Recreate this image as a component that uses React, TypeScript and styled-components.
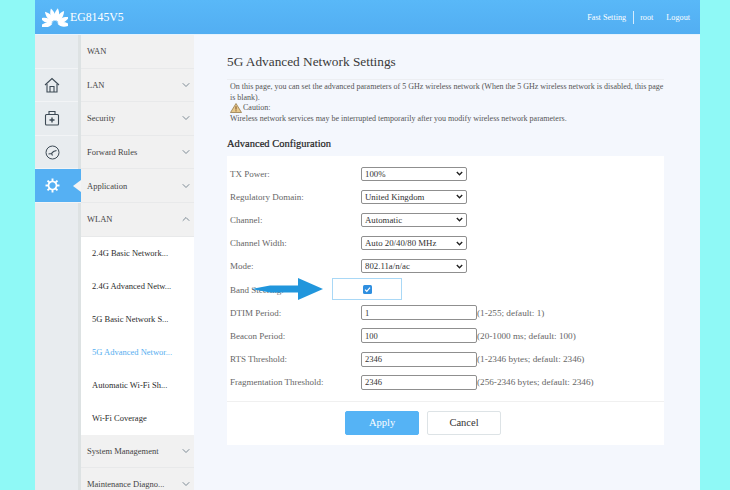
import React from 'react';
import styled, { createGlobalStyle } from 'styled-components';
import { ChevronDown, ChevronUp } from 'lucide-react';

const GlobalStyle = createGlobalStyle`
  html, body {
    margin: 0;
    padding: 0;
    height: 100%;
    overflow: hidden;
    background: #8ff9f6;
    font-family: "Liberation Serif", "Times New Roman", serif;
  }
`

const Page = styled.div`
  width: 665px;
  height: 490px;
  margin-left: 35px;
  display: flex;
  flex-direction: column;
  overflow: hidden;
`

const Header = styled.header`
  height: 34px;
  flex: none;
  display: flex;
  align-items: center;
  justify-content: space-between;
  padding: 0 3.5px 0 7px;
  background: linear-gradient(#59b8f8, #52aef2);
  border-bottom: 1px solid #e6f3fd;
  color: #fff;
`

const Brand = styled.div`
  display: flex;
  align-items: center;
  gap: 2px;
  font-size: 11.8px;
`

const TopLinks = styled.div`
  display: flex;
  align-items: center;
  font-size: 8.2px;
`

const TopLink = styled.span<{ $divided?: boolean }>`
  padding: 2px 6.5px;
  ${(p) => p.$divided && 'border-left: 1px solid #d5ecfd;'}
`

const Body = styled.div`
  flex: 1;
  display: flex;
  min-height: 0;
`

const Rail = styled.nav`
  width: 46px;
  flex: none;
  box-sizing: border-box;
  background: #e8ecef;
  border-right: 3px solid #dde2e3;
`

const RailItem = styled.div<{ $active?: boolean }>`
  position: relative;
  height: 33.6px;
  width: ${(p) => (p.$active ? '46px' : 'auto')};
  display: flex;
  align-items: center;
  justify-content: center;
  box-sizing: border-box;
  padding-right: ${(p) => (p.$active ? '12px' : '9px')};
  border-bottom: 1px solid #f2f4f6;
  background: ${(p) => (p.$active ? '#55b0f3' : 'transparent')};
  color: ${(p) => (p.$active ? '#fff' : '#3d4a55')};

  ${(p) =>
    p.$active &&
    `&::after {
      content: '';
      position: absolute;
      right: 0;
      top: 11px;
      border-style: solid;
      border-width: 6px 8px 6px 0;
      border-color: transparent #f4f4f4 transparent transparent;
    }`}
`

const Menu = styled.nav`
  width: 113px;
  flex: none;
  background: #f1f1f1;
`

const MenuItem = styled.div`
  height: 33.6px;
  box-sizing: border-box;
  display: flex;
  align-items: center;
  justify-content: space-between;
  padding: 0 2px 0 6px;
  border-bottom: 1px solid #e8e9ea;
  font-size: 8.5px;
  color: #444;
`

const SubMenu = styled.div`
  background: #fff;
`

const SubItem = styled.div<{ $active?: boolean }>`
  height: 33px;
  display: flex;
  align-items: center;
  padding-left: 11px;
  font-size: 8.5px;
  color: ${(p) => (p.$active ? '#55aef0' : '#2b2b2b')};
`

const Main = styled.main`
  flex: 1;
  min-width: 0;
  background: #f4f7fd;
  padding: 0 36px 0 33px;
`

const Title = styled.h1`
  margin: 18px 0 0;
  height: 26px;
  font-size: 13.3px;
  line-height: 17px;
  font-weight: 400;
  color: #3a3a3a;
  border-bottom: 1px solid #eceef2;
`

const Notice = styled.div`
  margin: 2px 0 0 3px;
  font-size: 8px;
  line-height: 10.5px;
  color: #555;
`

const Caution = styled.div`
  display: flex;
  align-items: center;
  gap: 1px;
`

const SectionTitle = styled.h2`
  margin: 13px 0 0;
  height: 19px;
  font-size: 10.5px;
  line-height: 14px;
  font-weight: 400;
  color: #222;
  -webkit-text-stroke: 0.2px #222;
`

const Panel = styled.section`
  position: relative;
  background: #fff;
  height: 289px;
  box-sizing: border-box;
  padding-top: 6px;
`

const Row = styled.div`
  height: 23.2px;
  display: grid;
  grid-template-columns: 131px auto;
  justify-content: start;
  align-items: center;
  padding-left: 3px;
  font-size: 9px;
  color: #666;
`

const Field = styled.div`
  display: flex;
  align-items: center;
`

const Select = styled.select`
  width: 106px;
  height: 14px;
  box-sizing: border-box;
  padding: 0 0 0 3px;
  appearance: none;
  font-family: inherit;
  font-size: 8.8px;
  color: #333;
  background: #fff url("data:image/svg+xml,%3Csvg xmlns='http://www.w3.org/2000/svg' width='7' height='5'%3E%3Cpath d='M.8 1l2.7 2.7L6.2 1' fill='none' stroke='%23222' stroke-width='1.4'/%3E%3C/svg%3E") no-repeat right 3px center;
  border: 1px solid #8f8f8f;
  border-radius: 2px;
`

const Input = styled.input`
  width: 116px;
  height: 15px;
  box-sizing: border-box;
  padding: 0 3px;
  font-family: inherit;
  font-size: 8.5px;
  color: #333;
  background: #fff;
  border: 1px solid #8f8f8f;
  border-radius: 2px;
`

const Hint = styled.span`
  font-size: 9.2px;
  color: #666;
`

const Highlight = styled.div`
  position: absolute;
  left: 105px;
  top: 122px;
  width: 70px;
  height: 22px;
  box-sizing: border-box;
  display: flex;
  align-items: center;
  justify-content: center;
  background: #fff;
  border: 1px solid #a9d8f6;
`

const Check = styled.span`
  width: 9px;
  height: 9px;
  border-radius: 1.5px;
  background: #2f8fe0;
  display: flex;
  align-items: center;
  justify-content: center;
`

const Arrow = styled.svg`
  position: absolute;
  left: 15px;
  top: 121px;
`

const Actions = styled.div`
  margin-top: 7px;
  border-top: 1px solid #f0f0f0;
  padding: 9px 0 0 118px;
  display: flex;
  gap: 8px;
`

const Button = styled.button<{ $primary?: boolean }>`
  width: 74px;
  height: 24px;
  box-sizing: border-box;
  border-radius: 2px;
  font-family: inherit;
  font-size: 10.5px;
  color: ${(p) => (p.$primary ? '#fff' : '#333')};
  background: ${(p) => (p.$primary ? '#55b3f5' : '#fff')};
  border: 1px solid ${(p) => (p.$primary ? '#55b3f5' : '#dde3e6')};
`

function Logo() {
  const petals = [-98, -68, -38, -13, 13, 38, 68, 98];
  return (
    <svg width="26" height="20" viewBox="-13 -16.5 26 20">
      {petals.map((a) => (
        <path key={a} d="M0 -2.5C-3.4 -6 -3.2 -11 -0.6 -15.5C2.6 -11 3.2 -6 0 -2.5Z" fill="#fff" transform={`rotate(${a})`} />
      ))}
    </svg>
  );
}

function HomeIcon() {
  return (
    <svg width="16" height="16" viewBox="0 0 16 16" fill="none" stroke="currentColor" strokeWidth="1.1">
      <path d="M1 8L8 1.5L15 8" />
      <path d="M3 7V15H13V7" />
      <path d="M6 15V9.5H10V15" />
    </svg>
  );
}

function KitIcon() {
  return (
    <svg width="16" height="16" viewBox="0 0 16 16" fill="none" stroke="currentColor" strokeWidth="1.1">
      <rect x="1.5" y="4.5" width="13" height="10.5" rx="1" />
      <path d="M5 4.5V1.5H11V4.5" />
      <path d="M8 7.5V12.5M5.5 10H10.5" strokeWidth="1.4" />
    </svg>
  );
}

function GaugeIcon() {
  return (
    <svg width="15" height="15" viewBox="0 0 15 15" fill="none" stroke="currentColor">
      <circle cx="7.5" cy="7.5" r="6.5" />
      <path d="M3.5 9L6.5 8.5L8.5 6.5L11.5 5.5M6.5 8.5L7.5 10.5" strokeWidth="1.1" />
    </svg>
  );
}

function GearIcon() {
  const teeth = [0, 45, 90, 135, 180, 225, 270, 315];
  return (
    <svg width="15" height="15" viewBox="-7.5 -7.5 15 15" fill="none" stroke="#fff">
      <circle r="4" strokeWidth="1.7" />
      {teeth.map((a) => (
        <path key={a} d="M0 -4.5V-7" strokeWidth="1.9" transform={`rotate(${a})`} />
      ))}
    </svg>
  );
}

function CautionIcon() {
  return (
    <svg width="12" height="10" viewBox="0 0 12 10">
      <path d="M6 0.5L11.5 9.5H0.5Z" fill="#e7c98c" stroke="#8a6d3b" strokeWidth="0.7" />
      <path d="M6 3.2V6.6M6 7.3V8.4" stroke="#7a4a20" strokeWidth="1" />
    </svg>
  );
}

const menuTop = ['LAN', 'Security', 'Forward Rules', 'Application'];
const subItems = [
  '2.4G Basic Network...',
  '2.4G Advanced Netw...',
  '5G Basic Network S...',
  '5G Advanced Networ...',
  'Automatic Wi-Fi Sh...',
  'Wi-Fi Coverage',
];
const selects = [
  ['TX Power:', '100%'],
  ['Regulatory Domain:', 'United Kingdom'],
  ['Channel:', 'Automatic'],
  ['Channel Width:', 'Auto 20/40/80 MHz'],
  ['Mode:', '802.11a/n/ac'],
];
const inputs = [
  ['DTIM Period:', '1', '(1-255; default: 1)'],
  ['Beacon Period:', '100', '(20-1000 ms; default: 100)'],
  ['RTS Threshold:', '2346', '(1-2346 bytes; default: 2346)'],
  ['Fragmentation Threshold:', '2346', '(256-2346 bytes; default: 2346)'],
];

export default function App() {
  return (
    <Page>
      <GlobalStyle />
      <Header>
        <Brand>
          <Logo />
          EG8145V5
        </Brand>
        <TopLinks>
          <TopLink>Fast Setting</TopLink>
          <TopLink $divided>root</TopLink>
          <TopLink>Logout</TopLink>
        </TopLinks>
      </Header>
      <Body>
        <Rail>
          <RailItem />
          <RailItem><HomeIcon /></RailItem>
          <RailItem><KitIcon /></RailItem>
          <RailItem><GaugeIcon /></RailItem>
          <RailItem $active><GearIcon /></RailItem>
        </Rail>
        <Menu>
          <MenuItem>WAN</MenuItem>
          {menuTop.map((m) => (
            <MenuItem key={m}>{m}<ChevronDown size={12} color="#7d8b95" /></MenuItem>
          ))}
          <MenuItem>WLAN<ChevronUp size={12} color="#7d8b95" /></MenuItem>
          <SubMenu>
            {subItems.map((s) => (
              <SubItem key={s} $active={s.startsWith('5G Adv')}>{s}</SubItem>
            ))}
          </SubMenu>
          <MenuItem>System Management<ChevronDown size={12} color="#7d8b95" /></MenuItem>
          <MenuItem>Maintenance Diagno...<ChevronDown size={12} color="#7d8b95" /></MenuItem>
        </Menu>
        <Main>
          <Title>5G Advanced Network Settings</Title>
          <Notice>
            On this page, you can set the advanced parameters of 5 GHz wireless network (When the 5 GHz wireless network is disabled, this page is blank).
            <Caution><CautionIcon />Caution:</Caution>
            Wireless network services may be interrupted temporarily after you modify wireless network parameters.
          </Notice>
          <SectionTitle>Advanced Configuration</SectionTitle>
          <Panel>
            {selects.map(([label, value]) => (
              <Row key={label}>
                {label}
                <Field>
                  <Select defaultValue={value}><option>{value}</option></Select>
                </Field>
              </Row>
            ))}
            <Row>Band Steering:</Row>
            {inputs.map(([label, value, hint]) => (
              <Row key={label}>
                {label}
                <Field>
                  <Input defaultValue={value} />
                  <Hint>{hint}</Hint>
                </Field>
              </Row>
            ))}
            <Actions>
              <Button $primary>Apply</Button>
              <Button>Cancel</Button>
            </Actions>
            <Highlight>
              <Check>
                <svg width="7" height="7" viewBox="0 0 7 7" fill="none" stroke="#fff" strokeWidth="1.2"><path d="M1 3.6L2.8 5.3L6 1.6" /></svg>
              </Check>
            </Highlight>
            <Arrow width="82" height="24" viewBox="0 0 82 24">
              <path d="M10 12L28 8.5H56V1L81 12L56 23V15.5H28Z" fill="#2196dc" />
            </Arrow>
          </Panel>
        </Main>
      </Body>
    </Page>
  );
}
